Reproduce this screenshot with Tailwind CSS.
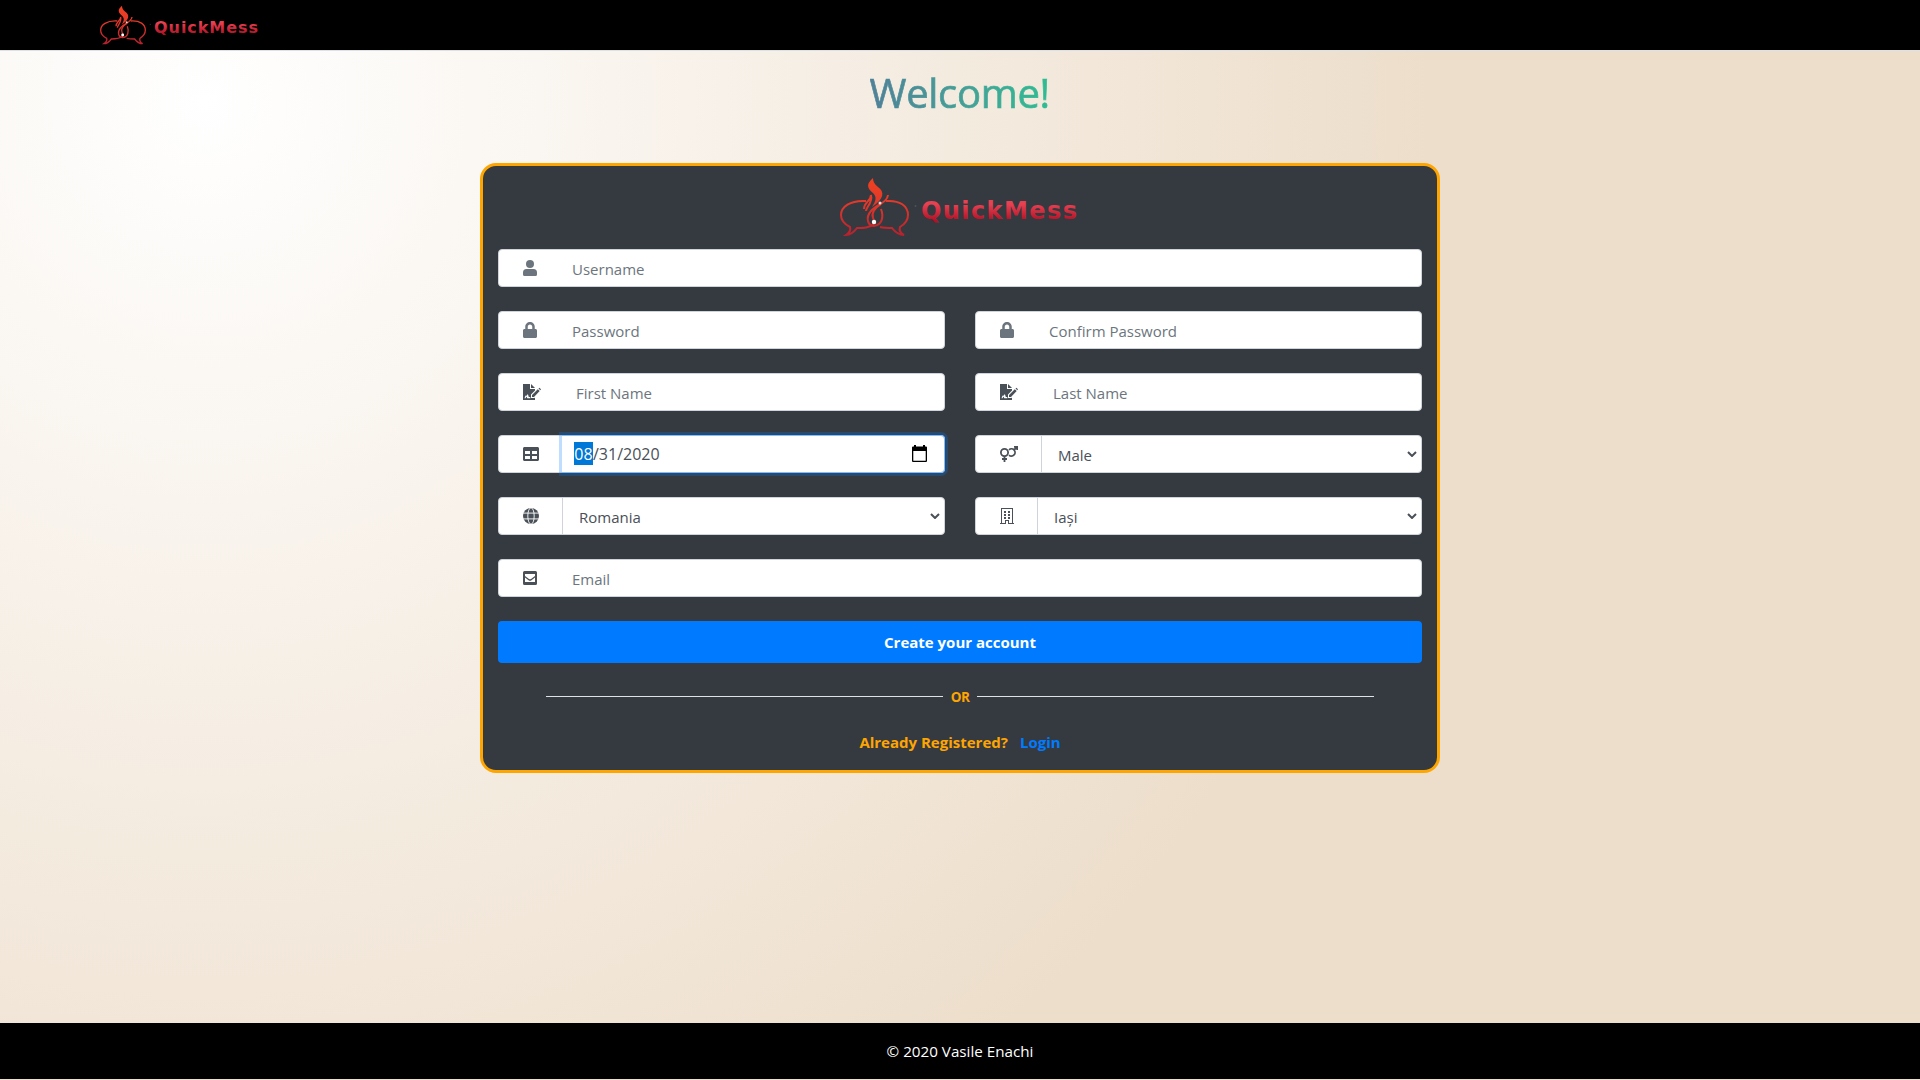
<!DOCTYPE html>
<html lang="en">
<head>
<meta charset="utf-8">
<title>QuickMess</title>
<script src="https://cdn.jsdelivr.net/npm/@tailwindcss/browser@4"></script>
</head>
<body class="m-0 h-[1080px] overflow-hidden bg-[#eddecb] font-['Open_Sans','Noto_Sans',sans-serif] text-[15px] leading-6 text-[#495057]">
<svg class="absolute h-0 w-0" xmlns="http://www.w3.org/2000/svg">
  <defs>
    <linearGradient id="flame" x1="0" y1="0" x2="0" y2="60" gradientUnits="userSpaceOnUse"><stop offset="0" stop-color="#f0421f"/><stop offset=".45" stop-color="#e2382b"/><stop offset="1" stop-color="#b3202e"/></linearGradient>
    <linearGradient id="word" x1="0" y1="0" x2="0" y2="1"><stop offset=".25" stop-color="#e84152"/><stop offset=".85" stop-color="#b01226"/></linearGradient>
  </defs>
  <symbol id="logo" viewBox="0 0 240 60" overflow="visible">
    <g fill="none" stroke="url(#flame)" stroke-width="2">
      <path d="M26 24C10 23 1 30 1 38c0 5 3 9 9 12 1 3-1 6-4 8 5 0 8-3 11-7 7 0 12 0 17-4"/>
      <path d="M46 24c14-1 22 5 22 14 0 5-3 9-8 12-1 3 0 6 4 8-6 0-9-3-12-7-5 0-8 0-12-1"/>
      <path d="M24 32c0-7 7-8 7-14 2 8-5 12-5 16"/>
      <path d="M48 18c-1 8-11 9-17 16-6 7-3 15 3 15 8-1 10-9 7-17"/>
      <path d="M41 27c-6 4-10 9-8 14 1 3 3 4 2 6"/>
    </g>
    <path d="M33 1c-7 6-6 10 0 15 4 4 3 8-1 14 12-8 13-15 6-20C34 7 33 4 33 1z" fill="url(#flame)"/>
    <circle cx="34" cy="45" r="2.200" fill="#fff"/><circle cx="40" cy="26" r="1.500" fill="#fff" fill-opacity=".8"/><circle cx="75.500" cy="29" r="1" fill="#777" fill-opacity=".4"/>
    <text x="81" y="42" textLength="156" lengthAdjust="spacing" font-family="DejaVu Sans" font-weight="700" font-size="24" fill="url(#word)">QuickMess</text>
  </symbol>
  <symbol id="user" viewBox="0 0 14 16"><circle cx="7" cy="4" r="4"/><path d="M3.500 9h7A3.500 3.500 0 0 1 14 12.500v2a1.500 1.500 0 0 1-1.500 1.500h-11A1.500 1.500 0 0 1 0 14.500v-2A3.500 3.500 0 0 1 3.500 9z"/></symbol>
  <symbol id="lock" viewBox="0 0 448 512"><path d="M400 224h-24v-72C376 68.200 307.800 0 224 0S72 68.200 72 152v72H48c-26.500 0-48 21.500-48 48v192c0 26.500 21.500 48 48 48h352c26.500 0 48-21.500 48-48V272c0-26.500-21.500-48-48-48zm-104 0H152v-72c0-39.700 32.300-72 72-72s72 32.300 72 72v72z"/></symbol>
  <symbol id="sign" viewBox="0 0 18 16"><path fill-rule="evenodd" d="M0 0h7v5h5v1.500L8 10.500V14h3.500l.5-.5V16H0zM1.500 14.300h1l1-1.800.8 1.800h3V13H5.800L5 10.500h-.8L3.300 12l-.8-.5z"/><path d="M8 0l4 4H8zM14.800 5.200l1.900 1.900-5.700 5.900H9v-2zM15.500 4.500l.9-.8L18 5.200l-.7 1.100z"/></symbol>
  <symbol id="table" viewBox="0 0 512 512"><path fill-rule="evenodd" d="M464 32H48C21.500 32 0 53.500 0 80v352c0 26.500 21.500 48 48 48h416c26.500 0 48-21.500 48-48V80c0-26.500-21.500-48-48-48zM224 416H64v-96h160v96zm0-160H64v-96h160v96zm224 160H288v-96h160v96zm0-160H288v-96h160v96z"/></symbol>
  <symbol id="globe" viewBox="0 0 16 16"><circle cx="8" cy="8" r="8"/><path d="M0 5.100h16M0 10.900h16" stroke="#fff" stroke-width=".9"/><ellipse cx="8" cy="8" rx="3.200" ry="8.200" fill="none" stroke="#fff" stroke-width=".9"/></symbol>
  <symbol id="mail" viewBox="0 0 14 14"><path fill-rule="evenodd" d="M1.500 0h11A1.500 1.500 0 0 1 14 1.500v11a1.500 1.500 0 0 1-1.500 1.500h-11A1.500 1.500 0 0 1 0 12.500v-11A1.500 1.500 0 0 1 1.500 0zM2 3v2l4 3q1 .7 2 0l4-3V3zm0 3.500V11h10V6.500L8.500 9.200q-1.500 1-3 0z"/></symbol>
  <symbol id="gender" viewBox="0 0 18 16"><g fill="none" stroke="currentColor" stroke-width="1.800"><circle cx="4.500" cy="6.500" r="3.600"/><path d="M4.500 10v6M2 13h5M9 3.800a3.600 3.600 0 1 1 0 5.300M13.500 4.500L17 1M14 .9h3.200V4"/></g></symbol>
  <symbol id="building" viewBox="0 0 14 16"><path fill-rule="evenodd" d="M1 0h12v15h1v1H8v-3H6v3H0v-1h1zM2 1v14h3v-3h4v3h3V1z"/><path d="M4 3h2v2H4zm4 0h2v2H8zM4 6h2v2H4zm4 0h2v2H8zM4 9h2v2H4zm4 0h2v2H8z"/></symbol>
  <symbol id="chev" viewBox="0 0 10 6"><path d="M1 1l4 4 4-4" fill="none" stroke="#495057" stroke-width="2"/></symbol>
</svg>
<div class="flex h-full flex-col">
  <header class="h-[50px] bg-black pl-[100px] pt-[5px]"><svg class="h-10 w-40 overflow-visible"><use href="#logo"/></svg></header>
  <main class="flex h-[973px] flex-col items-center border-t border-[#dee2e6] bg-[radial-gradient(circle_at_205px_50px,#fff_0px,#eddecb_1225px)]">
    <h1 class="mt-[18px] h-[48px] w-[181px] whitespace-nowrap bg-linear-to-r from-[#4f8198] to-[#2cbd93] bg-clip-text text-[40px] font-medium leading-[48px] tracking-[-0.3px] text-transparent [-webkit-text-stroke:0.7px_transparent]">Welcome!</h1>
    <section class="mt-[46px] flex h-[610px] w-[960px] flex-col rounded-2xl border-3 border-[#ffa500] bg-[#343a40] px-[15px]">
      <div class="flex h-[83px] justify-center pt-[11px]"><svg class="h-[60px] w-[240px] overflow-visible"><use href="#logo"/></svg></div>
      <form class="grid grid-cols-2 gap-x-[30px] gap-y-6">
        <div class="col-span-2 flex h-[38px] items-center rounded border border-[#ced4da] bg-white pl-6"><svg class="h-4 w-[14px] fill-[#6c757d]"><use href="#user"/></svg><span class="pl-[35px] pt-px text-[#6c757d]">Username</span></div>
        <div class="flex h-[38px] items-center rounded border border-[#ced4da] bg-white pl-6"><svg class="h-4 w-[14px] fill-[#6c757d]"><use href="#lock"/></svg><span class="pl-[35px] pt-px text-[#6c757d]">Password</span></div>
        <div class="flex h-[38px] items-center rounded border border-[#ced4da] bg-white pl-6"><svg class="h-4 w-[14px] fill-[#6c757d]"><use href="#lock"/></svg><span class="pl-[35px] pt-px text-[#6c757d]">Confirm Password</span></div>
        <div class="flex h-[38px] items-center rounded border border-[#ced4da] bg-white pl-6"><svg class="h-4 w-[18px] fill-[#495057]"><use href="#sign"/></svg><span class="pl-[35px] pt-px text-[#6c757d]">First Name</span></div>
        <div class="flex h-[38px] items-center rounded border border-[#ced4da] bg-white pl-6"><svg class="h-4 w-[18px] fill-[#495057]"><use href="#sign"/></svg><span class="pl-[35px] pt-px text-[#6c757d]">Last Name</span></div>
        <div class="flex h-[38px] items-center rounded border border-[#ced4da] bg-white pl-6"><svg class="h-4 w-4 shrink-0 fill-[#495057]"><use href="#table"/></svg>
          <div class="-mr-px ml-[23px] flex h-[38px] grow items-center rounded-r border border-l-0 border-[#80bdff] pl-3 pr-[17px] text-base shadow-[0_0_0_3px_rgba(0,123,255,0.25)]"><span class="-mt-px h-[23px] w-[19px] bg-[#0078d7] text-center leading-[24px] text-white">08</span><span>/31/2020</span>
          <svg class="-mt-0.5 ml-auto h-[17px] w-[15px]" viewBox="0 0 15 17"><path fill="#000" fill-rule="evenodd" d="M2 0h2v1.500h7V0h2v1.500h1a1 1 0 0 1 1 1V16a1 1 0 0 1-1 1H1a1 1 0 0 1-1-1V2.500a1 1 0 0 1 1-1h1zM1.300 6v9.700h12.400V6z"/></svg></div></div>
        <div class="flex h-[38px] items-center rounded border border-[#ced4da] bg-white pl-6 pr-1"><svg class="h-4 w-[18px]"><use href="#gender"/></svg><span class="ml-[23px] h-9 border-l border-[#ced4da] pl-4 pt-[7px]">Male</span><svg class="ml-auto h-1.5 w-2.5"><use href="#chev"/></svg></div>
        <div class="flex h-[38px] items-center rounded border border-[#ced4da] bg-white pl-6 pr-1"><svg class="h-4 w-4 fill-[#495057]"><use href="#globe"/></svg><span class="ml-[23px] h-9 border-l border-[#ced4da] pl-4 pt-[7px]">Romania</span><svg class="ml-auto h-1.5 w-2.5"><use href="#chev"/></svg></div>
        <div class="flex h-[38px] items-center rounded border border-[#ced4da] bg-white pl-6 pr-1"><svg class="h-4 w-[14px] fill-[#495057]"><use href="#building"/></svg><span class="ml-[23px] h-9 border-l border-[#ced4da] pl-4 pt-[7px]">Iași</span><svg class="ml-auto h-1.5 w-2.5"><use href="#chev"/></svg></div>
        <div class="col-span-2 flex h-[38px] items-center rounded border border-[#ced4da] bg-white pl-6"><svg class="h-[14px] w-[14px] fill-[#495057]"><use href="#mail"/></svg><span class="pl-[35px] pt-px text-[#6c757d]">Email</span></div>
        <div class="col-span-2 flex h-[42px] items-center justify-center rounded bg-[#007bff] pb-px font-bold text-white">Create your account</div>
      </form>
      <div class="mt-[23px] flex h-5 items-center px-12 text-[13.500px] font-bold text-[#ffa500]"><i class="h-px grow bg-[#dee2e6]"></i><span class="w-[34px] pt-0.5 text-center tracking-[-0.7px]">OR</span><i class="h-px grow bg-[#dee2e6]"></i></div>
      <p class="mt-6 flex justify-center gap-3 font-bold text-[#ffa500]">Already Registered?<span class="text-[#007bff]">Login</span></p>
    </section>
  </main>
  <footer class="flex h-14 items-center justify-center bg-black text-[15.200px] text-white">© 2020 Vasile Enachi</footer>
</div>
</body>
</html>
